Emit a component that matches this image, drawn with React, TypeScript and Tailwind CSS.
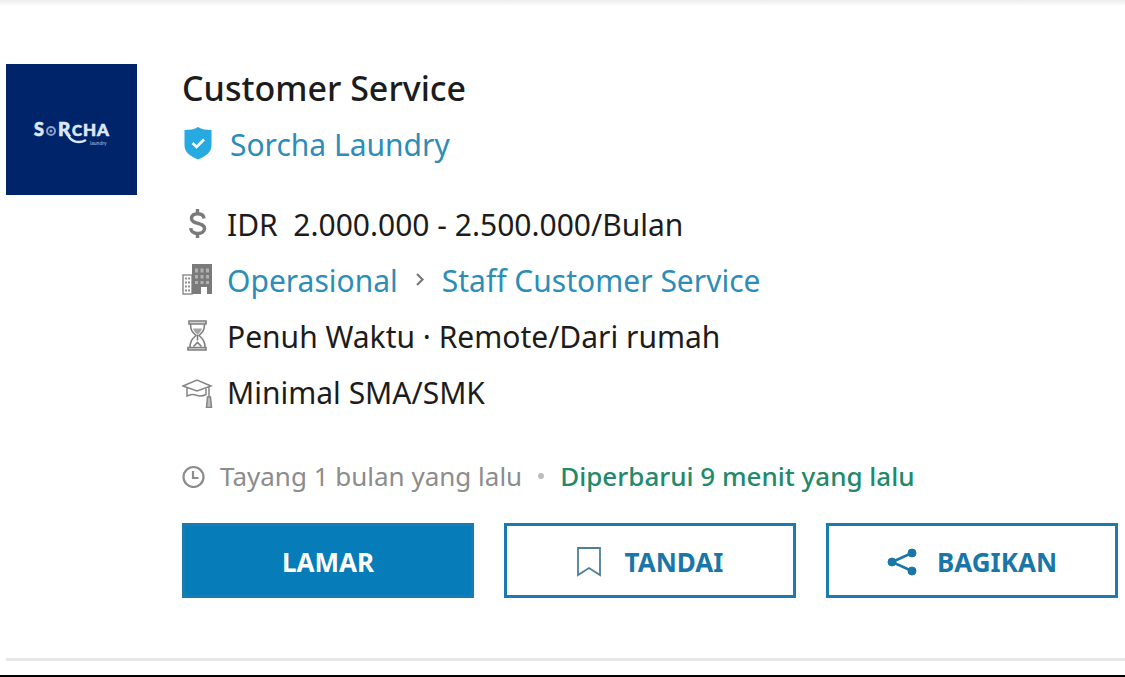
import type { ReactNode } from 'react';

interface DetailRowProps {
  icon: ReactNode;
  children: ReactNode;
}

function VerifiedIcon() {
  return (
    <svg className="h-9 w-8 shrink-0" viewBox="0 0 32 36" aria-hidden="true">
      <path
        d="M16 1c3.600 2.400 8.200 3 13.500 3v15.400c0 6.500-5.500 10.700-13.500 14-8-3.300-13.500-7.500-13.500-14V4C7.800 4 12.400 3.400 16 1z"
        fill="#27aae1"
      />
      <path d="M10.500 17l4 4 7.500-7.500" fill="none" stroke="#fff" strokeWidth="2.600" />
    </svg>
  );
}

function DollarIcon() {
  return (
    <svg className="size-8" viewBox="0 0 32 32" fill="none" stroke="#7a7a7a" strokeWidth="3.400" aria-hidden="true">
      <path d="M15.500 1v5M15.500 25v5" />
      <path d="M22 10.500c-.300-3.300-2.500-4.800-6.300-4.800-3.700 0-6.200 1.800-6.200 4.700 0 6.500 13 3.400 13 10.200 0 3.100-2.700 4.900-6.700 4.900-4.300 0-6.800-2-7.100-5.300" />
    </svg>
  );
}

function BuildingIcon() {
  return (
    <svg className="size-8" viewBox="0 0 32 32" aria-hidden="true">
      <path d="M1 30V11h9v19z" fill="#fff" stroke="#8f8f8f" strokeWidth="1.500" />
      <path d="M3 14.500h5M3 18.500h5M3 22.500h5M3 26.500h5" stroke="#8f8f8f" strokeWidth="2" strokeDasharray="2 1" />
      <path d="M10 0h20v30h-5v-7h-6v7h-9z" fill="#7a7a7a" />
      <path
        d="M13 4.500h3v4h-3zM18.500 4.500h3v4h-3zM24 4.500h3v4h-3zM13 11h3v3.500h-3zM18.500 11h3v3.500h-3zM24 11h3v3.500h-3zM13 17h3v3h-3zM18.500 17h3v3h-3zM24 17h3v3h-3z"
        fill="#b0b0b0"
      />
    </svg>
  );
}

function HourglassIcon() {
  return (
    <svg className="size-8" viewBox="0 0 32 32" fill="none" stroke="#7f7f7f" strokeWidth="1.600" aria-hidden="true">
      <path d="M7 1h17v3H7zM6 27.500h18v2.500H6z" fill="#d5d5d5" />
      <path d="M8.500 4c0 6 1.500 8 5.500 11.500C10 19 8 21.500 8 27.500M22.500 4c0 6-1.500 8-5.500 11.500 4 3.500 6 6 6 12" />
      <path d="M11 8.500h9c-.800 2.500-2.500 4.500-4.500 6-2-1.500-3.700-3.500-4.500-6z" fill="#a5a5a5" stroke="none" />
      <path d="M15.500 14.500v6M11.500 26.500l4-4 4 4" />
    </svg>
  );
}

function GraduationIcon() {
  return (
    <svg className="size-8" viewBox="0 0 32 32" fill="none" stroke="#858585" strokeWidth="1.500" aria-hidden="true">
      <path d="M1 10L15 4l14 6-14 5z" />
      <path d="M5 12v8c2.500-1 3.500-1.500 6-1.500 3 0 4 1.500 7 1.500 2.500 0 4-.500 6-1.500v-6" />
      <path d="M27 11v10" />
      <path d="M25.500 21h3l1 10.500h-5z" fill="#bdbdbd" />
    </svg>
  );
}

function ClockIcon() {
  return (
    <svg className="size-6 shrink-0" viewBox="0 0 24 24" fill="none" stroke="#8c8c8c" strokeWidth="2.200" aria-hidden="true">
      <circle cx="11.500" cy="13" r="10" />
      <path d="M11 7v7h5.500" />
    </svg>
  );
}

function ChevronIcon() {
  return (
    <svg className="h-4 w-3" viewBox="0 0 12 16" fill="none" stroke="#7a7a7a" strokeWidth="2.200" aria-hidden="true">
      <path d="M3 2l5.500 5.500L3 13" />
    </svg>
  );
}

function BookmarkIcon() {
  return (
    <svg className="h-8 w-6" viewBox="0 0 24 32" fill="none" stroke="#4f7f98" strokeWidth="1.800" aria-hidden="true">
      <path d="M1 1h22v27l-11-7L1 28z" />
    </svg>
  );
}

function ShareIcon() {
  return (
    <svg className="size-[30px]" viewBox="0 0 30 30" fill="#1a76a8" stroke="#1a76a8" aria-hidden="true">
      <path d="M25 5L5 14l20 9" fill="none" strokeWidth="2.600" />
      <circle cx="5" cy="14" r="4" />
      <circle cx="25" cy="5" r="4" />
      <circle cx="25" cy="23" r="4" />
    </svg>
  );
}

function CompanyLogo() {
  return (
    <svg className="size-[131px] shrink-0 bg-[#002469]" viewBox="0 0 131 131" role="img" aria-label="Sorcha Laundry">
      <g
        fill="#dce8fa"
        stroke="#dce8fa"
        strokeWidth="0.600"
        fontFamily="Lato, sans-serif"
        fontWeight="900"
      >
        <text x="28" y="72" fontSize="18">S</text>
        <text x="52" y="72" fontSize="19">R</text>
        <text x="66" y="72" fontSize="15">C</text>
        <text x="77" y="72" fontSize="17">H</text>
        <text x="91" y="72" fontSize="17">A</text>
      </g>
      <text x="84" y="81" fontSize="5" fill="#8ba2cc" fontFamily="Lato, sans-serif" fontWeight="700">laundry</text>
      <circle cx="45" cy="67" r="4" fill="none" stroke="#8ba2cc" strokeWidth="2" />
      <circle cx="45" cy="67" r="1.500" fill="#8ba2cc" />
      <path d="M62 71c3 7 11 9 18 5" fill="none" stroke="#dce8fa" strokeWidth="2.500" />
    </svg>
  );
}

function DetailRow({ icon, children }: DetailRowProps) {
  return (
    <li className="flex h-14 items-center gap-[13px]">
      <span className="shrink-0">{icon}</span>
      <span className="flex items-center whitespace-pre">{children}</span>
    </li>
  );
}

const actionClass =
  'flex h-[75px] flex-1 items-center justify-center border-3 border-[#1a7bb0] pt-1 text-[26px] font-bold';

export default function App() {
  return (
    <div className="border-b-2 border-black bg-white font-['Noto_Sans',sans-serif] text-[#1c1c1c]">
      <div className="h-1.5 bg-linear-to-b from-[#ededed] to-white" />
      <article className="ml-1.5 flex gap-[45px] border-b-3 border-[#e7e7e7] pt-[58px] pb-[60px]">
        <CompanyLogo />
        <div className="min-w-0 flex-1 pr-[7px]">
          <h2 className="text-[34px] leading-12 font-medium">Customer Service</h2>
          <div className="mt-1 flex h-14 items-center gap-4 text-[30px]">
            <VerifiedIcon />
            <a href="#company" className="text-[#2c8db8]">Sorcha Laundry</a>
          </div>
          <ul className="mt-6 text-[30px]">
            <DetailRow icon={<DollarIcon />}>{'IDR  2.000.000 - 2.500.000/Bulan'}</DetailRow>
            <DetailRow icon={<BuildingIcon />}>
              <a href="#operasional" className="text-[#2c8db8]">Operasional</a>
              <span className="mx-4"><ChevronIcon /></span>
              <a href="#staff" className="text-[#2c8db8]">Staff Customer Service</a>
            </DetailRow>
            <DetailRow icon={<HourglassIcon />}>Penuh Waktu · Remote/Dari rumah</DetailRow>
            <DetailRow icon={<GraduationIcon />}>Minimal SMA/SMK</DetailRow>
          </ul>
          <div className="mt-7 flex h-14 items-center text-[26px] whitespace-nowrap text-[#8c8c8c]">
            <ClockIcon />
            <span className="ml-3.5">Tayang 1 bulan yang lalu</span>
            <span className="mx-4 size-1.5 rounded-full bg-[#bcbcbc]" />
            <span className="font-medium text-[#23896b]">Diperbarui 9 menit yang lalu</span>
          </div>
          <div className="mt-[19px] flex gap-[30px]">
            <button type="button" className={`${actionClass} bg-[#067db9] text-white`}>LAMAR</button>
            <button type="button" className={`${actionClass} gap-6 text-[#1a76a8]`}>
              <BookmarkIcon />
              TANDAI
            </button>
            <button type="button" className={`${actionClass} gap-5 text-[#1a76a8]`}>
              <ShareIcon />
              BAGIKAN
            </button>
          </div>
        </div>
      </article>
      <div className="h-3.5" />
    </div>
  );
}
